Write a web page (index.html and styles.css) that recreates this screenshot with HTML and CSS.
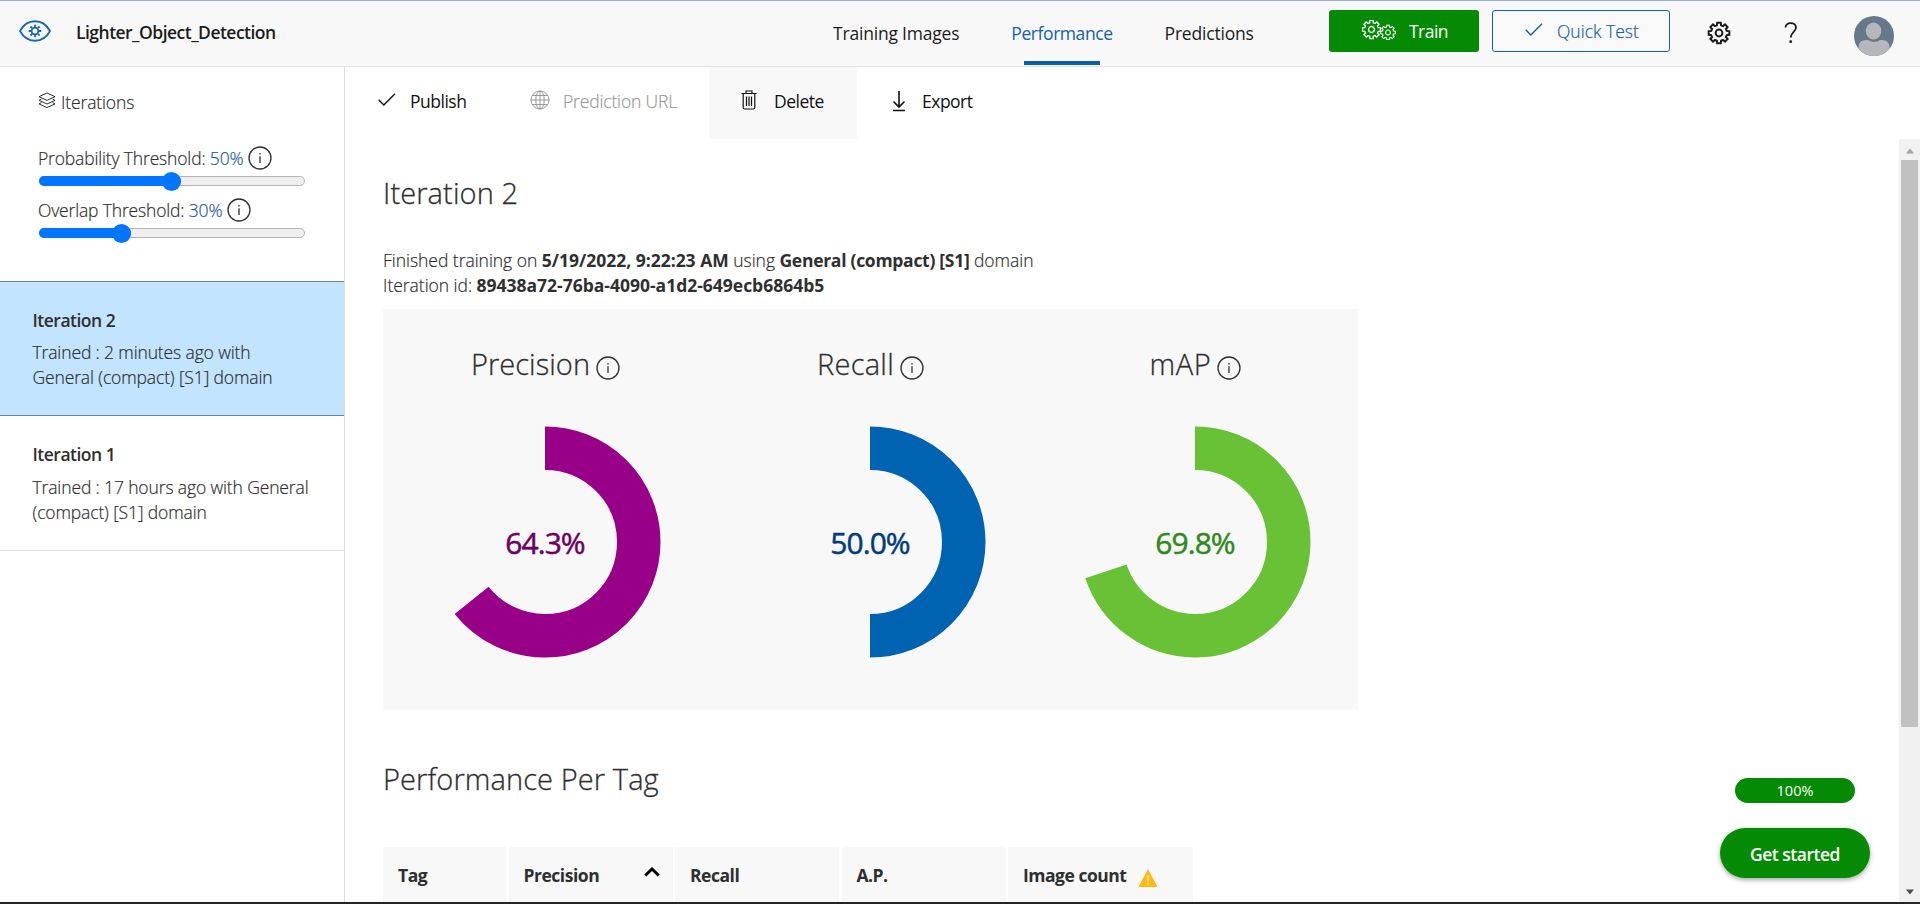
FILE: index.html
```html
<!DOCTYPE html>
<html lang="en">
<head>
<meta charset="utf-8">
<title>Lighter_Object_Detection</title>
<link rel="stylesheet" href="styles.css">
</head>
<body>
<svg class="defs" width="0" height="0">
  <symbol id="cog" viewBox="-12 -12 24 24"><path d="M-2.07-7.73L-1.82-10.34 1.82-10.34 2.07-7.73 4-6.93 6.02-8.6 8.6-6.02 6.93-4 7.73-2.07 10.34-1.82 10.34 1.82 7.73 2.07 6.93 4 8.6 6.02 6.02 8.6 4 6.93 2.07 7.73 1.82 10.34-1.82 10.34-2.07 7.73-4 6.93-6.02 8.6-8.6 6.02-6.93 4-7.73 2.07-10.34 1.82-10.34-1.82-7.73-2.07-6.93-4-8.6-6.02-6.02-8.6-4-6.93Z"/><circle r="3.4"/></symbol>
  <symbol id="sun" viewBox="-8 -8 16 16"><circle r="3.4"/><path d="M0-6.300V-4M0 4V6.300M-6.300 0H-4M4 0H6.300M-4.500-4.500L-2.900-2.900M2.900 2.900L4.500 4.500M4.500-4.500L2.900-2.900M-2.900 2.900L-4.500 4.500"/></symbol>
  <symbol id="check" viewBox="0 0 18 14"><path d="M.7 6.8L5.8 12 17 .8"/></symbol>
  <symbol id="info" viewBox="0 0 24 24"><circle cx="12" cy="12" r="11"/><path d="M12 10.2V17M12 7V8.6"/></symbol>
</svg>
<header class="header">
  <svg class="eye" viewBox="0 0 32 22"><path d="M1 11C8-2 24-2 31 11C24 24 8 24 1 11Z"/><use href="#sun" x="8" y="3" width="16" height="16"/></svg>
  <h1 class="project"><span>Lighter_Object_Detection</span></h1>
  <nav class="nav">
    <a><span>Training Images</span></a>
    <a class="active"><span>Performance</span></a>
    <a><span>Predictions</span></a>
  </nav>
  <button class="train"><svg class="cogs" viewBox="0 0 34 20"><use href="#cog" x="-1" y="-1" width="21" height="21"/><use href="#cog" x="17.5" y="4" width="17" height="17"/></svg><span>Train</span></button>
  <button class="quick"><svg class="check"><use href="#check"/></svg><span>Quick Test</span></button>
  <svg class="settings"><use href="#cog"/></svg>
  <svg class="help" viewBox="0 0 14 22"><path d="M1.500 5.600C1.500-.4 12-.4 12 5.600C12 9.600 6.700 10.200 6.700 15.500"/><circle cx="6.700" cy="19.700" r="1.400"/></svg>
  <svg class="avatar" viewBox="0 0 40 40"><clipPath id="face"><circle cx="20" cy="20" r="20"/></clipPath><g clip-path="url(#face)"><rect width="40" height="40" fill="#66788a"/><path d="M4.500 40V31Q5 24 12 24H14Q20 28 26 24H28Q35 24 35.500 31V40Z" fill="#b4b8bc"/><ellipse cx="19.500" cy="15" rx="8.500" ry="9.500" fill="#66788a"/><ellipse cx="19.500" cy="15" rx="7.800" ry="8.600" fill="#b4b8bc"/></g></svg>
</header>
<div class="body">
  <aside class="sidebar">
    <section class="filters">
      <h2 class="side-title"><svg viewBox="0 0 18 17"><path d="M9 1L17 4.700 9 8.400 1 4.700ZM3.500 7L1 8.300 9 12 17 8.300 14.500 7M3.500 10.600L1 11.900 9 15.600 17 11.900 14.500 10.600"/></svg><span>Iterations</span></h2>
      <div class="thresh"><span>Probability Threshold: <b>50%</b></span><svg class="info"><use href="#info"/></svg></div>
      <div class="slider p50"><i></i></div>
      <div class="thresh"><span>Overlap Threshold: <b>30%</b></span><svg class="info"><use href="#info"/></svg></div>
      <div class="slider p30"><i></i></div>
    </section>
    <article class="iter selected">
      <h3><span>Iteration 2</span></h3>
      <p><span>Trained : 2 minutes ago with</span><br><span>General (compact) [S1] domain</span></p>
    </article>
    <article class="iter">
      <h3><span>Iteration 1</span></h3>
      <p><span>Trained : 17 hours ago with General</span><br><span>(compact) [S1] domain</span></p>
    </article>
  </aside>
  <main class="main">
    <div class="toolbar">
      <a class="tool publish"><svg class="check"><use href="#check"/></svg><span>Publish</span></a>
      <a class="tool url"><svg viewBox="0 0 20 20"><circle cx="10" cy="10" r="9"/><ellipse cx="10" cy="10" rx="4.200" ry="9"/><path d="M10 1V19M1 10H19M2.200 5.500H17.800M2.200 14.500H17.800"/></svg><span>Prediction URL</span></a>
      <a class="tool delete"><svg viewBox="0 0 16 20"><path d="M.5 3.500H15.500M5 3.500V1H11V3.500M2.200 3.500V17.500Q2.200 19 3.700 19H12.300Q13.800 19 13.800 17.500V3.500M5.500 6.500V16M8 6.500V16M10.500 6.500V16"/></svg><span>Delete</span></a>
      <a class="tool export"><svg viewBox="0 0 14 22"><path d="M7 1V16.500M1.500 11.500L7 17 12.500 11.500M1 20.500H13"/></svg><span>Export</span></a>
    </div>
    <div class="scroll">
      <div class="content">
        <h2 class="heading"><span>Iteration 2</span></h2>
        <p class="meta"><span>Finished training on <b>5/19/2022, 9:22:23 AM</b> using <b class="domain">General (compact) [S1]</b> domain</span><br><span>Iteration id: <b>89438a72-76ba-4090-a1d2-649ecb6864b5</b></span></p>
        <section class="charts">
          <figure class="precision"><figcaption><span>Precision</span><svg class="info"><use href="#info"/></svg></figcaption>
            <div class="donut"><svg viewBox="0 0 232 232"><circle cx="116" cy="116" r="93.750" pathLength="100" stroke-dasharray="64.300 100"/></svg><strong>64.3%</strong></div></figure>
          <figure class="recall"><figcaption><span>Recall</span><svg class="info"><use href="#info"/></svg></figcaption>
            <div class="donut"><svg viewBox="0 0 232 232"><circle cx="116" cy="116" r="93.750" pathLength="100" stroke-dasharray="50 100"/></svg><strong>50.0%</strong></div></figure>
          <figure class="map"><figcaption><span>mAP</span><svg class="info"><use href="#info"/></svg></figcaption>
            <div class="donut"><svg viewBox="0 0 232 232"><circle cx="116" cy="116" r="93.750" pathLength="100" stroke-dasharray="69.900 100"/></svg><strong>69.8%</strong></div></figure>
        </section>
        <h2 class="heading tags"><span>Performance Per Tag</span></h2>
        <div class="table">
          <div><span>Tag</span></div>
          <div><span>Precision</span><svg class="sort" viewBox="0 0 16 10"><path d="M1.300 8.500L8 2 14.700 8.500"/></svg></div>
          <div><span>Recall</span></div>
          <div><span>A.P.</span></div>
          <div><span>Image count</span><svg class="warn" viewBox="0 0 20 18"><path d="M10 0L19.500 18H.5Z" fill="#ffb910"/><path d="M10 6.500V12.500M10 14V15.500" stroke="#fff" stroke-width="1.300"/></svg></div>
        </div>
      </div>
      <div class="scrollbar"><svg viewBox="0 0 10 6"><path d="M1 5.500L5 .5 9 5.500Z"/></svg><i></i><svg class="down" viewBox="0 0 10 6"><path d="M1 .5H9L5 5.500Z"/></svg></div>
    </div>
  </main>
</div>
<div class="footline"></div>
<div class="guide"><div class="progress"><span>100%</span></div><button class="start"><span>Get started</span></button></div>
</body>
</html>
```
FILE: styles.css
```css
* { box-sizing: border-box; }
body { margin: 0; height: 904px; overflow: hidden; display: flex; flex-direction: column; background: #fff; color: #2f2f2f; font: 300 17.5px/25px "Open Sans", "Noto Sans", sans-serif; letter-spacing: -.13px; -webkit-text-stroke: .2px; }
h1, h2, h3, p, figure { margin: 0; font-size: inherit; font-weight: inherit; }
svg { display: block; flex: none; fill: none; stroke: currentColor; }
button { font: inherit; letter-spacing: inherit; }
span { white-space: nowrap; }
.defs { position: absolute; }

.header { height: 67px; flex: none; display: flex; align-items: flex-start; background: linear-gradient(#f2f6fb, #f8f8f8 6px); border-top: 1px solid #a5b1c2; border-bottom: 1px solid #e3e3e3; color: #1c1c1c; -webkit-text-stroke: 0; }
.eye { width: 32px; height: 22px; margin: 19px 0 0 19px; color: #1468b3; stroke-width: 1.8; }
.project { width: 200px; margin: 19px 0 0 25px; font-weight: 600; letter-spacing: -.52px; }
.nav { display: flex; gap: 52px; margin: 20px 0 0 557px; font-weight: 400; width: 421px; letter-spacing: -.2px; }
.nav a { height: 45px; }
.active { color: #1560ac; display: flex; flex-direction: column; align-items: center; justify-content: space-between; letter-spacing: -.43px; }
.active::after { content: ""; width: 76px; height: 4px; margin-bottom: 1px; background: #0b5fa5; }
.train, .quick { height: 42px; margin-top: 9px; padding: 0; border-radius: 3px; display: flex; align-items: center; }
.train { width: 150px; margin-left: 75px; background: #048a04; border: 0; color: #fff; font-weight: 400; letter-spacing: -.53px; }
.cogs { width: 34px; height: 20px; margin: -2px 13px 0 33px; stroke-width: 1.5; }
.quick { width: 178px; margin-left: 13px; background: #f9f9f9; border: 1px solid #1560ac; color: #1560ac; font-weight: 300; letter-spacing: 0; -webkit-text-stroke: .2px; }
.check { width: 18px; height: 14px; stroke-width: 1.4; }
.quick .check { margin: -3px 14px 0 32px; }
.settings { width: 24px; height: 24px; margin: 20px 0 0 37px; stroke-width: 2; }
.help { width: 14px; height: 22px; margin: 21px 0 0 53px; stroke-width: 1.8; }
.help circle { fill: currentColor; stroke: none; }
.avatar { width: 40px; height: 40px; margin: 15px 0 0 56px; stroke: none; }

.body { flex: 1; min-height: 0; display: flex; }
.sidebar { width: 345px; flex: none; border-right: 1px solid #ddd; }
.filters { height: 214px; padding: 23px 0 0 37px; }
.side-title { display: flex; gap: 5px; margin-bottom: 31px; }
.side-title svg { width: 18px; height: 17px; margin: 2px 0 0 1px; }
.thresh { display: flex; height: 25px; gap: 5px; margin-left: 1px; letter-spacing: -.16px; }
.thresh b { font-weight: 300; color: #1a569f; }
.info { width: 24px; height: 24px; stroke-width: 1.3; }
.slider { width: 266px; height: 10px; margin: 5px 0 12px 2px; border: 1px solid #b4b4b4; border-radius: 5px; background: #efefef; }
.slider i { display: flex; height: 10px; margin: -1px 0 0 -1px; border-radius: 5px; background: #0075ff; align-items: center; justify-content: flex-end; }
.slider i::after { content: ""; width: 19px; height: 19px; flex: none; border-radius: 50%; background: #0075ff; }
.p50 i { width: 142px; }
.p30 i { width: 92px; }
.iter { height: 135px; padding: 26px 32.5px 0; border-bottom: 1px solid #ddd; }
.iter h3 { font-weight: 600; margin-bottom: 8px; letter-spacing: -.5px; -webkit-text-stroke: 0; }
.selected { border-top: 1px solid #6b8299; border-bottom-color: #6b8299; background: #c2e4ff; }
.selected h3 { margin-bottom: 7px; }

.main { flex: 1; min-width: 0; display: flex; flex-direction: column; }
.toolbar { height: 72px; flex: none; display: flex; }
.tool { display: flex; align-items: flex-start; padding-top: 22px; color: #111; font-weight: 400; letter-spacing: -.5px; -webkit-text-stroke: 0; }
.tool svg { flex: none; }
.publish { width: 186px; padding-left: 33px; }
.publish .check { margin: 4px 14px 0 0; }
.url { width: 178px; color: #999; font-weight: 300; letter-spacing: -.16px; -webkit-text-stroke: .2px; }
.url svg { width: 20px; height: 20px; margin: 1px 13px 0 -1px; }
.delete { width: 148px; padding-left: 32px; background: #f8f8f8; }
.delete svg { width: 16px; height: 20px; margin: 1px 17px 0 0; stroke-width: 1.2; }
.export { padding-left: 35px; }
.export svg { width: 14px; height: 22px; margin: 1px 16px 0 0; stroke-width: 1.6; }
.scroll { flex: 1; min-height: 0; display: flex; }
.content { flex: 1; padding: 34px 0 0 38px; overflow: hidden; }
.heading { font-size: 29px; line-height: 40px; letter-spacing: .1px; -webkit-text-stroke: .3px; }
.meta { margin: 35px 0 0; height: 61px; letter-spacing: -.03px; }
.meta b { font-weight: 700; -webkit-text-stroke: 0; letter-spacing: -.01px; }
.meta .domain { letter-spacing: -.28px; }
.charts { width: 975px; height: 401px; display: grid; grid-template-columns: repeat(3, 325px); background: #f8f8f8; }
.charts figcaption { display: flex; justify-content: center; gap: 6px; padding-top: 35px; height: 117px; font-size: 29px; line-height: 40px; letter-spacing: .05px; -webkit-text-stroke: .3px; }
.charts .recall figcaption { letter-spacing: .26px; }
.charts .map figcaption { letter-spacing: .6px; }
.charts .info { margin-top: 12px; }
.donut { display: grid; place-items: center; margin-left: -1px; }
.donut > * { grid-area: 1 / 1; }
.donut svg { width: 232px; height: 232px; transform: rotate(-90deg); stroke-width: 43.5; }
.donut strong { font-size: 30px; font-weight: 400; letter-spacing: -.95px; -webkit-text-stroke: .5px; }
.precision .donut { color: #990088; }
.precision strong { color: #6c0060; }
.recall .donut { color: #0063b1; }
.recall strong { color: #003a80; }
.map .donut { color: #69c236; }
.map strong { color: #2e8a1d; }
.tags { margin-top: 49px; }
.table { margin-top: 48px; display: grid; grid-template-columns: 123px 164px 164px 164px 185px; gap: 2.5px; font-weight: 700; letter-spacing: -.48px; -webkit-text-stroke: 0; }
.table div { height: 60px; padding: 16px 0 0 15px; display: flex; background: #f8f8f8; }
.sort { width: 16px; height: 10px; margin: 4px 0 0 45px; color: #000; stroke-width: 3; }
.warn { width: 20px; height: 18px; margin: 6px 0 0 12px; stroke: none; }
.scrollbar { width: 21px; display: flex; flex-direction: column; align-items: center; background: #f1f1f1; padding: 9px 0 7px; color: #a3a3a3; }
.scrollbar svg { width: 10px; height: 6px; fill: currentColor; stroke: none; }
.scrollbar i { width: 17px; height: 567px; margin-top: 6px; background: #c1c1c1; }
.scrollbar .down { margin-top: auto; color: #505050; }
.footline { height: 2px; flex: none; background: #242424; }
.guide { position: absolute; left: 1720px; top: 778px; width: 150px; display: flex; flex-direction: column; align-items: center; gap: 25px; color: #fff; -webkit-text-stroke: 0; }
.progress { width: 120px; height: 25px; border-radius: 13px; background: #048a04; text-align: center; font: 400 14.5px/26px "Open Sans", sans-serif; letter-spacing: 0; }
.start { width: 150px; height: 50px; padding: 2px 0 0; border: 0; border-radius: 25px; background: #048a04; color: #fff; font-weight: 600; letter-spacing: -.48px; box-shadow: 0 2px 5px rgba(0, 0, 0, .35); }
```
